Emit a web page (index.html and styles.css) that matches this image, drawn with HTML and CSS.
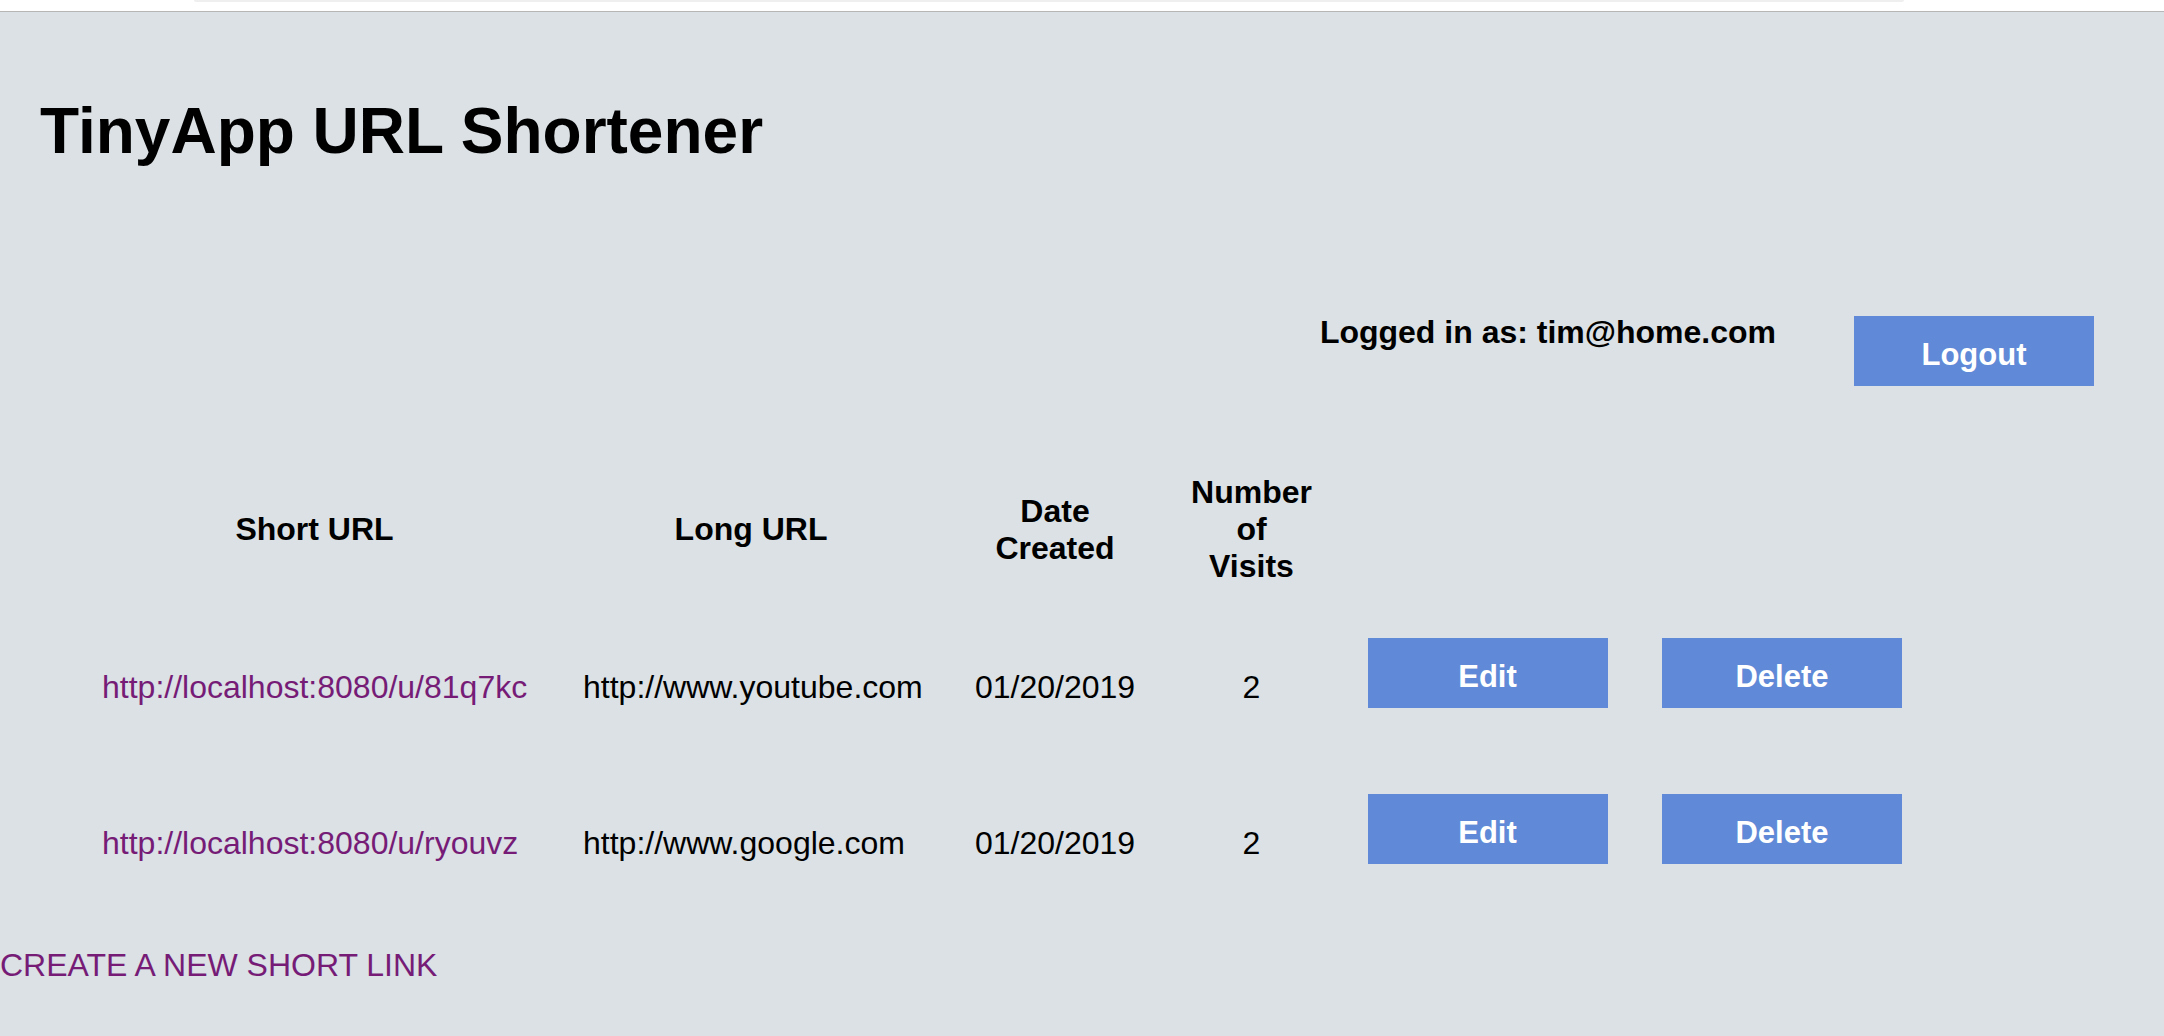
FILE: index.html
```html
<!DOCTYPE html>
<html lang="en">
<head>
<meta charset="utf-8">
<title>TinyApp URL Shortener</title>
<link rel="stylesheet" href="styles.css">
</head>
<body>
<div class="chrome"><div class="chrome-bar"></div></div>
<h1 class="title">TinyApp URL Shortener</h1>
<div class="userbar">
  <span class="user">Logged in as: tim@home.com</span>
  <form class="logout-form"><button type="button" class="btn">Logout</button></form>
</div>
<table class="urls">
  <colgroup>
    <col class="c-short"><col class="c-long"><col class="c-date"><col class="c-visits"><col class="c-edit"><col class="c-del">
  </colgroup>
  <thead>
    <tr>
      <th>Short URL</th>
      <th>Long URL</th>
      <th>Date<br>Created</th>
      <th>Number<br>of<br>Visits</th>
      <th></th>
      <th></th>
    </tr>
  </thead>
  <tbody>
    <tr>
      <td class="left"><a class="link" href="#">http://localhost:8080/u/81q7kc</a></td>
      <td class="left">http://www.youtube.com</td>
      <td class="left">01/20/2019</td>
      <td>2</td>
      <td><form class="row-form"><button type="button" class="btn">Edit</button></form></td>
      <td><form class="row-form"><button type="button" class="btn">Delete</button></form></td>
    </tr>
    <tr>
      <td class="left"><a class="link" href="#">http://localhost:8080/u/ryouvz</a></td>
      <td class="left">http://www.google.com</td>
      <td class="left">01/20/2019</td>
      <td>2</td>
      <td><form class="row-form"><button type="button" class="btn">Edit</button></form></td>
      <td><form class="row-form"><button type="button" class="btn">Delete</button></form></td>
    </tr>
  </tbody>
</table>
<div class="create"><a class="link" href="#">CREATE A NEW SHORT LINK</a></div>
</body>
</html>
```

FILE: styles.css
```css
html, body {
  margin: 0;
  padding: 0;
}
body {
  background: #dbe1e5;
  font-family: "Liberation Sans", Arial, Helvetica, sans-serif;
  font-size: 32px;
  color: #000;
  min-height: 1036px;
}
.chrome {
  height: 11px;
  background: #ffffff;
  border-bottom: 1px solid #b6b6b6;
}
.chrome-bar {
  margin: 0 260px 0 194px;
  height: 2px;
  background: #efefef;
  border-radius: 0 0 6px 6px;
}
.title {
  margin: 82px 0 0 40px;
  font-size: 64px;
  font-weight: bold;
  line-height: normal;
}
.userbar {
  margin-top: 146px;
  display: flex;
  justify-content: flex-end;
  align-items: flex-start;
  gap: 78px;
  padding-right: 70px;
}
.user {
  font-weight: bold;
  line-height: normal;
}
.logout-form {
  margin: 2px 0 0 0;
}
.btn {
  display: block;
  width: 240px;
  height: 70px;
  border: 0;
  padding: 8px 0 0 0;
  margin: 0;
  background: #608ad7;
  color: #ffffff;
  font-family: "Liberation Sans", Arial, Helvetica, sans-serif;
  font-size: 31px;
  font-weight: bold;
  text-align: center;
  cursor: pointer;
}
.urls {
  margin: 63px 0 0 74px;
  border-collapse: collapse;
  border-spacing: 0;
  table-layout: fixed;
  width: 1855px;
}
.c-short { width: 481px; }
.c-long { width: 392px; }
.c-date { width: 216px; }
.c-visits { width: 177px; }
.c-edit { width: 295px; }
.c-del { width: 294px; }
.urls th {
  font-weight: bold;
  text-align: center;
  vertical-align: middle;
  line-height: normal;
  padding: 25px 0;
}
.urls td {
  text-align: center;
  vertical-align: middle;
  line-height: normal;
  padding: 28px 0 29px 0;
  white-space: nowrap;
}
.urls td.left {
  text-align: left;
  padding-left: 28px;
}
.row-form {
  margin: 0 0 29px 0;
  display: flex;
  justify-content: center;
}
.link {
  color: #761c77;
  text-decoration: none;
}
.create {
  margin-top: 25px;
  line-height: normal;
}
```
